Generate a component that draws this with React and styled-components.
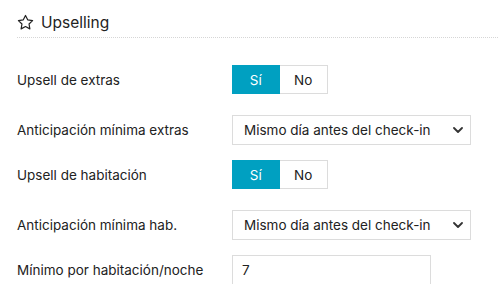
import React from "react";
import styled, { createGlobalStyle } from "styled-components";

const Global = createGlobalStyle`
  html, body { margin: 0; padding: 0; background: #fff; }
  body { font-family: Inter, "Noto Sans", sans-serif; color: #222; }
  * { box-sizing: border-box; }
`;

const Page = styled.div`
  padding: 0 0 0 17px;
  width: 498px;
`;

const Header = styled.div`
  display: flex;
  align-items: center;
  gap: 7px;
  height: 38px;
  padding: 7px 0 0 0;
  border-bottom: 1px dotted #d6d6d6;
  font-size: 15.5px;
  color: #222;
`;

const Form = styled.div`
  display: flex;
  flex-direction: column;
  padding-top: 27px;
`;

const Row = styled.div`
  display: grid;
  grid-template-columns: 215px 1fr;
  align-items: center;
  height: 29px;
  margin-bottom: ${(p) => p.$gap}px;
`;

const Label = styled.label`
  font-size: 13.5px;
  color: #222;
`;

const Toggle = styled.div`
  display: flex;
  width: 96px;
  height: 29px;
  border: 1px solid #dcdcdc;
`;

const Seg = styled.div`
  flex: 1;
  display: flex;
  align-items: center;
  justify-content: center;
  font-size: 13.5px;
  background: ${(p) => (p.$on ? "#00a0c1" : "#fff")};
  color: ${(p) => (p.$on ? "#fff" : "#222")};
  margin: ${(p) => (p.$on ? "-1px 0 -1px -1px" : "0")};
`;

const Select = styled.div`
  display: flex;
  align-items: center;
  justify-content: space-between;
  width: 239px;
  height: 30px;
  border: 1px solid #dcdcdc;
  padding: 0 7px 0 11px;
  font-size: 13.5px;
  color: #222;
`;

const Input = styled.div`
  display: flex;
  align-items: center;
  width: 199px;
  height: 30px;
  border: 1px solid #dcdcdc;
  padding: 0 9px;
  font-size: 13.5px;
  color: #222;
`;

const Star = () => (
  <svg width="17" height="17" viewBox="0 0 24 24" fill="none" stroke="#222" strokeWidth="1.7" strokeLinejoin="round">
    <polygon points="12 2 15.09 8.26 22 9.27 17 14.14 18.18 21.02 12 17.77 5.82 21.02 7 14.14 2 9.27 8.91 8.26 12 2" />
  </svg>
);

const Chevron = () => (
  <svg width="10" height="6" viewBox="0 0 10 6" fill="none" stroke="#333" strokeWidth="1.8" strokeLinecap="round" strokeLinejoin="round">
    <polyline points="1 1 5 5 9 1" />
  </svg>
);

const YesNo = () => (
  <Toggle>
    <Seg $on>Sí</Seg>
    <Seg>No</Seg>
  </Toggle>
);

const Dropdown = ({ value }) => (
  <Select>
    <span>{value}</span>
    <Chevron />
  </Select>
);

export default function App() {
  return (
    <Page>
      <Global />
      <Header>
        <Star />
        <span>Upselling</span>
      </Header>
      <Form>
        <Row $gap={21}>
          <Label>Upsell de extras</Label>
          <YesNo />
        </Row>
        <Row $gap={16}>
          <Label>Anticipación mínima extras</Label>
          <Dropdown value="Mismo día antes del check-in" />
        </Row>
        <Row $gap={21}>
          <Label>Upsell de habitación</Label>
          <YesNo />
        </Row>
        <Row $gap={16}>
          <Label>Anticipación mínima hab.</Label>
          <Dropdown value="Mismo día antes del check-in" />
        </Row>
        <Row $gap={0}>
          <Label>Mínimo por habitación/noche</Label>
          <Input>7</Input>
        </Row>
      </Form>
    </Page>
  );
}
